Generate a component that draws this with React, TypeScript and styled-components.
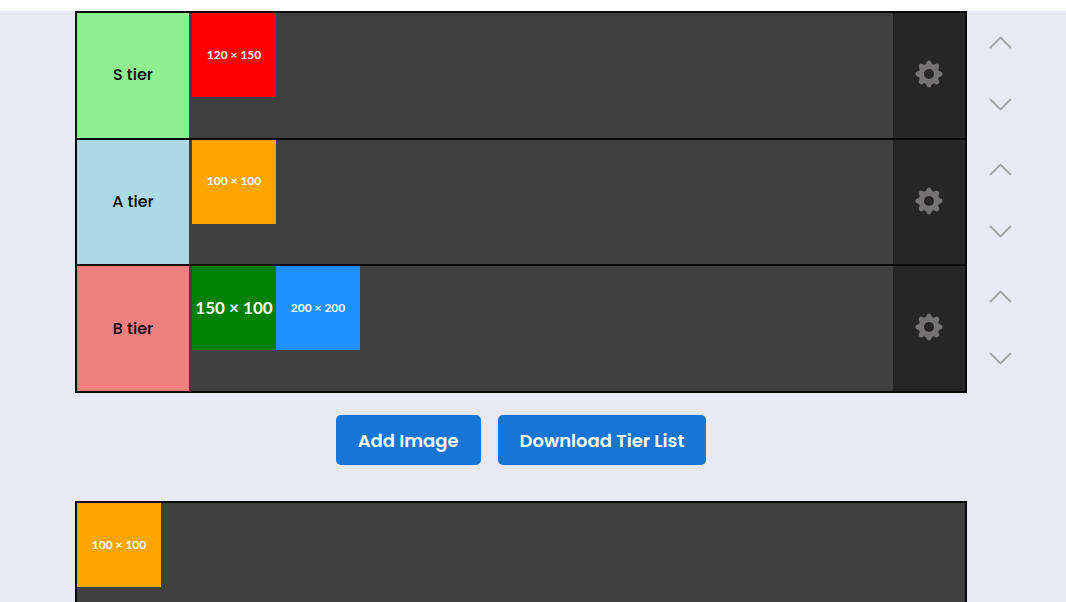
import React from 'react';
import styled, { createGlobalStyle } from 'styled-components';

const GlobalStyle = createGlobalStyle`
  * { box-sizing: border-box; }
  body {
    margin: 0;
    background: #fff;
    color: #000;
    font-family: Poppins, Inter, "Liberation Sans", sans-serif;
  }
  button { font: inherit; }
`;

const Page = styled.main`
  display: grid;
  grid-template-columns: minmax(0, 1fr) 67px;
  align-content: start;
  height: calc(100vh - 11px);
  margin-top: 11px;
  padding: 0 32px 0 75px;
  overflow: hidden;
  background: #e9e9f3;
`;

const Board = styled.section`
  display: flex;
  flex-direction: column;
  gap: 2px;
  min-height: 382px;
  border: 2px solid #080a0a;
  background: #080a0a;
`;

const Tier = styled.div`
  display: flex;
  flex: 1;
  background: #404040;
`;

const TierLabel = styled.div<{ $color: string }>`
  display: flex;
  align-items: center;
  justify-content: center;
  flex: 0 0 112px;
  margin-right: 3px;
  background: ${(p) => p.$color};
  font-size: 16px;
  font-weight: 500;
  line-height: 24px;
`;

const Items = styled.div`
  display: flex;
  flex-wrap: wrap;
  align-content: flex-start;
  flex: 1;
`;

const Item = styled.div<{ $color: string; $large?: boolean }>`
  display: flex;
  align-items: center;
  justify-content: center;
  width: 84px;
  height: 84px;
  padding-bottom: 1px;
  background: ${(p) => p.$color};
  color: #fff;
  font-family: Lato, sans-serif;
  font-size: ${(p) => (p.$large ? 17 : 12)}px;
  font-weight: 700;
  line-height: ${(p) => (p.$large ? 20 : 14)}px;
  white-space: nowrap;
`;

const SettingsButton = styled.button`
  display: flex;
  align-items: center;
  justify-content: center;
  flex: 0 0 72px;
  padding: 0 0 3px;
  border: 0;
  background: #262626;
  color: #757373;
  cursor: pointer;
`;

const Movers = styled.div`
  display: flex;
  flex-direction: column;
  padding: 1px 0;
`;

const MoverPair = styled.div`
  display: flex;
  flex: 1;
  flex-direction: column;
  padding-bottom: 3px;
`;

const MoveButton = styled.button`
  display: flex;
  align-items: center;
  justify-content: center;
  flex: 1;
  padding: 0;
  border: 0;
  background: none;
  color: #a5a4a7;
  cursor: pointer;
`;

const Actions = styled.div`
  display: flex;
  grid-column: 1;
  justify-content: center;
  gap: 17px;
  padding: 22px 0 36px;
`;

const ActionButton = styled.button`
  height: 50px;
  padding: 2px 22px 0;
  border: 0;
  border-radius: 5px;
  background: #1775d8;
  color: #fff;
  font-size: 18px;
  font-weight: 600;
  line-height: 28px;
  white-space: nowrap;
  cursor: pointer;
`;

const Pool = styled.section`
  display: flex;
  flex-wrap: wrap;
  align-content: flex-start;
  grid-column: 1;
  min-height: 129px;
  border: 2px solid #080a0a;
  background: #404040;
`;

const TOOTH =
  'M-5 -8.6Q-2.8 -9.6 -2.4 -11.6Q-2 -13.6 0 -13.6Q2 -13.6 2.4 -11.6Q2.8 -9.6 5 -8.6Z';

const Gear = () => (
  <svg width="28" height="28" viewBox="-14 -14 28 28" aria-hidden="true">
    <circle r="7.6" fill="none" stroke="currentColor" strokeWidth="5.2" />
    {[0, 45, 90, 135, 180, 225, 270, 315].map((angle) => (
      <path key={angle} d={TOOTH} fill="currentColor" transform={`rotate(${angle})`} />
    ))}
  </svg>
);

const Chevron = ({ up }: { up?: boolean }) => (
  <svg width="23" height="13" viewBox="0 0 23 13" fill="none" aria-hidden="true">
    <path
      d={up ? 'M1 12L11.5 1.5L22 12' : 'M1 1L11.5 11.5L22 1'}
      stroke="currentColor"
      strokeWidth="1.9"
    />
  </svg>
);

type Tile = { text: string; color: string; large?: boolean };

const tiers: { name: string; color: string; items: Tile[] }[] = [
  { name: 'S tier', color: 'lightgreen', items: [{ text: '120 × 150', color: 'red' }] },
  { name: 'A tier', color: 'lightblue', items: [{ text: '100 × 100', color: 'orange' }] },
  {
    name: 'B tier',
    color: 'lightcoral',
    items: [
      { text: '150 × 100', color: 'green', large: true },
      { text: '200 × 200', color: 'dodgerblue' },
    ],
  },
];

export default function App() {
  return (
    <>
      <GlobalStyle />
      <Page>
        <Board aria-label="Tier list">
          {tiers.map((tier) => (
            <Tier key={tier.name}>
              <TierLabel $color={tier.color}>{tier.name}</TierLabel>
              <Items>
                {tier.items.map((item) => (
                  <Item key={item.text} $color={item.color} $large={item.large}>
                    {item.text}
                  </Item>
                ))}
              </Items>
              <SettingsButton aria-label={`${tier.name} settings`}>
                <Gear />
              </SettingsButton>
            </Tier>
          ))}
        </Board>
        <Movers>
          {tiers.map((tier) => (
            <MoverPair key={tier.name}>
              <MoveButton aria-label={`Move ${tier.name} up`}>
                <Chevron up />
              </MoveButton>
              <MoveButton aria-label={`Move ${tier.name} down`}>
                <Chevron />
              </MoveButton>
            </MoverPair>
          ))}
        </Movers>
        <Actions>
          <ActionButton type="button">Add Image</ActionButton>
          <ActionButton type="button">Download Tier List</ActionButton>
        </Actions>
        <Pool aria-label="Unranked images">
          <Item $color="orange">100 × 100</Item>
        </Pool>
      </Page>
    </>
  );
}
